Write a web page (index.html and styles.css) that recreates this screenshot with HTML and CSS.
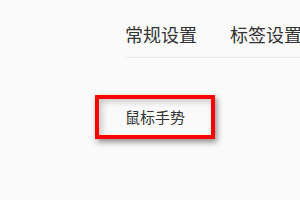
FILE: index.html
```html
<!DOCTYPE html>
<html lang="zh-CN">
<head>
    <meta charset="UTF-8">
    <title>设置</title>
    <link rel="stylesheet" href="styles.css">
</head>
<body>
    <div class="page">
        <nav class="tabs">
            <span class="tab">常规设置</span>
            <span class="tab">标签设置</span>
        </nav>
        <div class="section">
            <div class="item highlight">鼠标手势</div>
        </div>
    </div>
</body>
</html>
```

FILE: styles.css
```css
body {
    margin: 0;
    background-color: #fafafa;
    font-family: "Noto Sans CJK SC", "Microsoft YaHei", sans-serif;
    color: #333;
    overflow: hidden;
}
.page {
    width: 300px;
    height: 200px;
}
.tabs {
    display: flex;
    gap: 33px;
    margin-left: 125px;
    padding-top: 21px;
    height: 36px;
    border-bottom: 1px solid #e6e6e6;
    white-space: nowrap;
}
.tab {
    font-size: 18px;
    line-height: 26px;
}
.section {
    padding: 37px 0 0 95px;
}
.item {
    width: 112px;
    height: 36px;
    line-height: 36px;
    text-align: center;
    font-size: 15px;
}
.highlight {
    border: 4px solid #ff0000;
    box-shadow: 2px 3px 6px rgba(0, 0, 0, 0.45), inset 3px 3px 6px rgba(0, 0, 0, 0.2);
}
```
